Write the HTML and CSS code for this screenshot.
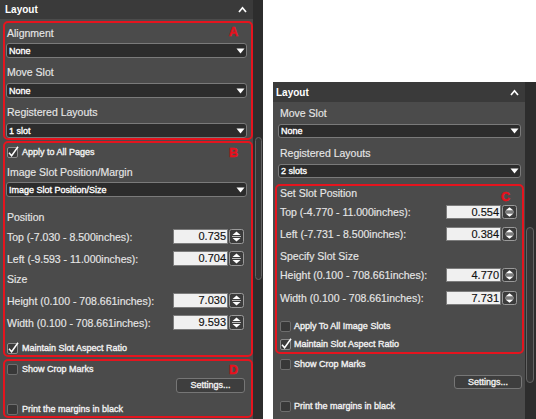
FILE: index.html
```html
<!DOCTYPE html>
<html>
<head>
<meta charset="utf-8">
<link rel="stylesheet" href="styles.css">
</head>
<body>
<div class="page">
  <section class="panel panel-left">
    <div class="panel-main">
      <div class="panel-head">
        <span>Layout</span>
        <svg class="chev" width="9" height="7" viewBox="0 0 9 7"><polyline points="1,6 4.5,1.8 8,6" fill="none" stroke="#fff" stroke-width="1.7"/></svg>
      </div>

      <div class="group group-a">
        <span class="mark">A</span>
        <div class="label l-first">Alignment</div>
        <div class="select s-first"><span>None</span><svg width="9" height="6" viewBox="0 0 9 6"><polygon points="0.5,0.5 8.5,0.5 4.5,5.5" fill="#fff"/></svg></div>
        <div class="label">Move Slot</div>
        <div class="select"><span>None</span><svg width="9" height="6" viewBox="0 0 9 6"><polygon points="0.5,0.5 8.5,0.5 4.5,5.5" fill="#fff"/></svg></div>
        <div class="label">Registered Layouts</div>
        <div class="select"><span>1 slot</span><svg width="9" height="6" viewBox="0 0 9 6"><polygon points="0.5,0.5 8.5,0.5 4.5,5.5" fill="#fff"/></svg></div>
      </div>

      <div class="group group-b">
        <span class="mark">B</span>
        <div class="check c-apply">
          <svg width="12" height="12" viewBox="0 0 12 12"><rect x="0.5" y="1.5" width="10" height="10" rx="1.5" fill="#3a3a3a" stroke="#8c8c8c"/><polyline points="2,6.8 4.6,9.8 11,0.8" fill="none" stroke="#fff" stroke-width="1.5"/></svg>
          <span>Apply to All Pages</span>
        </div>
        <div class="label l-ispm">Image Slot Position/Margin</div>
        <div class="select s-first"><span>Image Slot Position/Size</span><svg width="9" height="6" viewBox="0 0 9 6"><polygon points="0.5,0.5 8.5,0.5 4.5,5.5" fill="#fff"/></svg></div>
        <div class="label l-position">Position</div>
        <div class="row r-top">
          <span class="row-label">Top (-7.030 - 8.500inches):</span>
          <div class="num">0.735</div>
          <svg class="spin" width="15" height="15" viewBox="0 0 15 15"><rect x="0.5" y="0.5" width="14" height="14" rx="2" fill="#3b3b3b" stroke="#9a9a9a"/><polygon points="3.5,6 7.5,2.5 11.5,6" fill="#fff"/><line x1="3" y1="7.5" x2="12" y2="7.5" stroke="#ddd" stroke-width="0.8"/><polygon points="3.5,9 11.5,9 7.5,12.5" fill="#fff"/></svg>
        </div>
        <div class="row r-left">
          <span class="row-label">Left (-9.593 - 11.000inches):</span>
          <div class="num">0.704</div>
          <svg class="spin" width="15" height="15" viewBox="0 0 15 15"><rect x="0.5" y="0.5" width="14" height="14" rx="2" fill="#3b3b3b" stroke="#9a9a9a"/><polygon points="3.5,6 7.5,2.5 11.5,6" fill="#fff"/><line x1="3" y1="7.5" x2="12" y2="7.5" stroke="#ddd" stroke-width="0.8"/><polygon points="3.5,9 11.5,9 7.5,12.5" fill="#fff"/></svg>
        </div>
        <div class="label l-size">Size</div>
        <div class="row r-height">
          <span class="row-label">Height (0.100 - 708.661inches):</span>
          <div class="num">7.030</div>
          <svg class="spin" width="15" height="15" viewBox="0 0 15 15"><rect x="0.5" y="0.5" width="14" height="14" rx="2" fill="#3b3b3b" stroke="#9a9a9a"/><polygon points="3.5,6 7.5,2.5 11.5,6" fill="#fff"/><line x1="3" y1="7.5" x2="12" y2="7.5" stroke="#ddd" stroke-width="0.8"/><polygon points="3.5,9 11.5,9 7.5,12.5" fill="#fff"/></svg>
        </div>
        <div class="row r-width">
          <span class="row-label">Width (0.100 - 708.661inches):</span>
          <div class="num">9.593</div>
          <svg class="spin" width="15" height="15" viewBox="0 0 15 15"><rect x="0.5" y="0.5" width="14" height="14" rx="2" fill="#3b3b3b" stroke="#9a9a9a"/><polygon points="3.5,6 7.5,2.5 11.5,6" fill="#fff"/><line x1="3" y1="7.5" x2="12" y2="7.5" stroke="#ddd" stroke-width="0.8"/><polygon points="3.5,9 11.5,9 7.5,12.5" fill="#fff"/></svg>
        </div>
        <div class="check c-maintain">
          <svg width="12" height="12" viewBox="0 0 12 12"><rect x="0.5" y="1.5" width="10" height="10" rx="1.5" fill="#3a3a3a" stroke="#8c8c8c"/><polyline points="2,6.8 4.6,9.8 11,0.8" fill="none" stroke="#fff" stroke-width="1.5"/></svg>
          <span>Maintain Slot Aspect Ratio</span>
        </div>
      </div>

      <div class="group group-d">
        <span class="mark">D</span>
        <div class="check c-crop">
          <svg width="12" height="12" viewBox="0 0 12 12"><rect x="0.5" y="1.5" width="10" height="10" rx="1.5" fill="#383838" stroke="#6e6e6e"/></svg>
          <span>Show Crop Marks</span>
        </div>
        <div class="btn-row"><div class="btn">Settings...</div></div>
        <div class="check c-print">
          <svg width="12" height="12" viewBox="0 0 12 12"><rect x="0.5" y="1.5" width="10" height="10" rx="1.5" fill="#383838" stroke="#6e6e6e"/></svg>
          <span>Print the margins in black</span>
        </div>
      </div>
    </div>
    <div class="scroll"><div class="thumb"></div></div>
  </section>

  <section class="panel panel-right">
    <div class="panel-main">
      <div class="panel-head">
        <span>Layout</span>
        <svg class="chev" width="9" height="7" viewBox="0 0 9 7"><polyline points="1,6 4.5,1.8 8,6" fill="none" stroke="#fff" stroke-width="1.7"/></svg>
      </div>
      <div class="label rl-move">Move Slot</div>
      <div class="select rs"><span>None</span><svg width="9" height="6" viewBox="0 0 9 6"><polygon points="0.5,0.5 8.5,0.5 4.5,5.5" fill="#fff"/></svg></div>
      <div class="label rl-reg">Registered Layouts</div>
      <div class="select rs"><span>2 slots</span><svg width="9" height="6" viewBox="0 0 9 6"><polygon points="0.5,0.5 8.5,0.5 4.5,5.5" fill="#fff"/></svg></div>

      <div class="group group-c">
        <span class="mark">C</span>
        <div class="label rl-set">Set Slot Position</div>
        <div class="row rr rr-top">
          <span class="row-label">Top (-4.770 - 11.000inches):</span>
          <div class="num">0.554</div>
          <svg class="spin" width="15" height="14" viewBox="0 0 15 14"><rect x="0.5" y="0.5" width="14" height="13" rx="2" fill="#3b3b3b" stroke="#9a9a9a"/><polygon points="3.5,5.6 7.5,2.3 11.5,5.6" fill="#fff"/><line x1="3" y1="7" x2="12" y2="7" stroke="#ddd" stroke-width="0.8"/><polygon points="3.5,8.4 11.5,8.4 7.5,11.7" fill="#fff"/></svg>
        </div>
        <div class="row rr rr-left">
          <span class="row-label">Left (-7.731 - 8.500inches):</span>
          <div class="num">0.384</div>
          <svg class="spin" width="15" height="14" viewBox="0 0 15 14"><rect x="0.5" y="0.5" width="14" height="13" rx="2" fill="#3b3b3b" stroke="#9a9a9a"/><polygon points="3.5,5.6 7.5,2.3 11.5,5.6" fill="#fff"/><line x1="3" y1="7" x2="12" y2="7" stroke="#ddd" stroke-width="0.8"/><polygon points="3.5,8.4 11.5,8.4 7.5,11.7" fill="#fff"/></svg>
        </div>
        <div class="label rl-spec">Specify Slot Size</div>
        <div class="row rr rr-height">
          <span class="row-label">Height (0.100 - 708.661inches):</span>
          <div class="num">4.770</div>
          <svg class="spin" width="15" height="14" viewBox="0 0 15 14"><rect x="0.5" y="0.5" width="14" height="13" rx="2" fill="#3b3b3b" stroke="#9a9a9a"/><polygon points="3.5,5.6 7.5,2.3 11.5,5.6" fill="#fff"/><line x1="3" y1="7" x2="12" y2="7" stroke="#ddd" stroke-width="0.8"/><polygon points="3.5,8.4 11.5,8.4 7.5,11.7" fill="#fff"/></svg>
        </div>
        <div class="row rr rr-width">
          <span class="row-label">Width (0.100 - 708.661inches):</span>
          <div class="num">7.731</div>
          <svg class="spin" width="15" height="14" viewBox="0 0 15 14"><rect x="0.5" y="0.5" width="14" height="13" rx="2" fill="#3b3b3b" stroke="#9a9a9a"/><polygon points="3.5,5.6 7.5,2.3 11.5,5.6" fill="#fff"/><line x1="3" y1="7" x2="12" y2="7" stroke="#ddd" stroke-width="0.8"/><polygon points="3.5,8.4 11.5,8.4 7.5,11.7" fill="#fff"/></svg>
        </div>
        <div class="check rc rc-apply">
          <svg width="12" height="12" viewBox="0 0 12 12"><rect x="0.5" y="1.5" width="10" height="10" rx="1.5" fill="#383838" stroke="#6e6e6e"/></svg>
          <span>Apply To All Image Slots</span>
        </div>
        <div class="check rc rc-maintain">
          <svg width="12" height="12" viewBox="0 0 12 12"><rect x="0.5" y="1.5" width="10" height="10" rx="1.5" fill="#3a3a3a" stroke="#8c8c8c"/><polyline points="2,6.8 4.6,9.8 11,0.8" fill="none" stroke="#fff" stroke-width="1.5"/></svg>
          <span>Maintain Slot Aspect Ratio</span>
        </div>
      </div>

      <div class="check rc rc-crop">
        <svg width="12" height="12" viewBox="0 0 12 12"><rect x="0.5" y="1.5" width="10" height="10" rx="1.5" fill="#383838" stroke="#6e6e6e"/></svg>
        <span>Show Crop Marks</span>
      </div>
      <div class="btn-row r-btn-row"><div class="btn r-btn">Settings...</div></div>
      <div class="check rc rc-print">
        <svg width="12" height="12" viewBox="0 0 12 12"><rect x="0.5" y="1.5" width="10" height="10" rx="1.5" fill="#383838" stroke="#6e6e6e"/></svg>
        <span>Print the margins in black</span>
      </div>
    </div>
    <div class="scroll"><div class="thumb"></div></div>
  </section>
</div>
</body>
</html>
```

FILE: styles.css
```css
* { box-sizing: border-box; }

html, body {
  margin: 0;
  padding: 0;
  background: #ffffff;
}

body {
  font-family: "Liberation Sans", Arial, sans-serif;
  color: #e8e8e8;
}

.page {
  display: flex;
  align-items: flex-start;
  width: 536px;
  height: 419px;
  overflow: hidden;
}

.panel {
  display: flex;
  background: #4b4b4b;
}

.panel-left {
  width: 263px;
  height: 419px;
}

.panel-right {
  width: 263px;
  height: 337px;
  margin-left: 10px;
  margin-top: 82px;
}

.panel-main {
  display: flex;
  flex-direction: column;
}

.panel-left .panel-main { width: 253px; }
.panel-right .panel-main { width: 252px; }

.scroll {
  flex: 1;
  background: #2d2d2d;
}

.thumb {
  border: 1px solid #646464;
  background: #363636;
  border-radius: 4px;
}

.panel-left .thumb {
  width: 7px;
  height: 143px;
  margin-left: 2px;
  margin-top: 137px;
}

.panel-right .thumb {
  width: 8px;
  height: 156px;
  margin-left: 1px;
  margin-top: 145px;
}

.panel-head {
  display: flex;
  align-items: center;
  justify-content: space-between;
  background: #3a3a3a;
  color: #ffffff;
  font-weight: bold;
  font-size: 10px;
}

.panel-left .panel-head {
  height: 19px;
  padding: 0 6px 0 5px;
}

.panel-right .panel-head {
  height: 20px;
  padding: 0 6px 0 3px;
}

/* group boxes */
.group {
  position: relative;
  border: 2px solid #e5141e;
  border-radius: 5px;
  display: flex;
  flex-direction: column;
}

.panel-left .group {
  margin-left: 3px;
  padding: 0 4px 0 1px;
}

.group-a { margin-top: 2px; }
.group-b { margin-top: 1px; }
.group-d { margin-top: 2px; }

.mark {
  position: absolute;
  left: 224px;
  font-size: 12.5px;
  line-height: 12px;
  font-weight: bold;
  color: #e8101c;
  -webkit-text-stroke: 0.5px #e8101c;
}

.group-a .mark { top: 3px; }
.group-b .mark { top: 4px; }
.group-d .mark { top: 3px; }
.group-c .mark { top: 5px; }

/* labels */
.label {
  height: 16px;
  line-height: 16px;
  font-size: 10.5px;
  color: #e6e6e6;
  margin-top: 6px;
  padding-left: 1px;
  white-space: nowrap;
  -webkit-text-stroke: 0.15px #e6e6e6;
}

.label.l-first { margin-top: 2px; }
.label.l-ispm { margin-top: 4px; }
.label.l-position { margin-top: 12px; }
.label.l-size { margin-top: 5px; }

/* selects */
.select {
  height: 15px;
  margin-top: 3px;
  background: #2c2c2c;
  border: 1px solid #7a7a7a;
  border-radius: 3px;
  display: flex;
  align-items: center;
  justify-content: space-between;
  padding: 0 1px 0 2px;
  font-size: 9px;
  color: #ffffff;
  -webkit-text-stroke: 0.35px #ffffff;
}

.select.s-first { margin-top: 2px; }

/* value rows */
.row {
  display: flex;
  align-items: center;
  height: 15px;
  padding-left: 1px;
  padding-right: 3px;
}

.row-label {
  flex: 1;
  font-size: 10.5px;
  color: #e6e6e6;
  white-space: nowrap;
  -webkit-text-stroke: 0.15px #e6e6e6;
}

.num {
  width: 55px;
  height: 15px;
  background: #f0f0f0;
  border: 1px solid #7c7c7c;
  color: #111111;
  font-size: 11px;
  line-height: 13px;
  text-align: right;
  padding-right: 1px;
  -webkit-text-stroke: 0.15px #111111;
}

.spin {
  display: block;
  margin-left: 1px;
}

.r-top { margin-top: 4px; }
.r-left { margin-top: 7px; }
.r-height { margin-top: 6px; }
.r-width { margin-top: 7px; }

/* checkboxes */
.check {
  display: flex;
  align-items: center;
  height: 14px;
  font-size: 9px;
  color: #f2f2f2;
  white-space: nowrap;
  padding-left: 1px;
  -webkit-text-stroke: 0.35px #f2f2f2;
}

.check svg {
  display: block;
  margin-right: 3px;
}

.c-apply { height: 16px; margin-top: 1px; }
.c-maintain { margin-top: 11px; }
.c-crop { margin-top: 1px; }
.c-print { margin-top: 9px; }

/* buttons */
.btn-row {
  display: flex;
  justify-content: flex-end;
  margin-top: 2px;
}

.btn {
  width: 69px;
  height: 15px;
  margin-right: 2px;
  background: #3e3e3e;
  border: 1px solid #767676;
  border-radius: 3px;
  font-size: 9px;
  line-height: 13px;
  text-align: center;
  color: #f2f2f2;
  -webkit-text-stroke: 0.35px #f2f2f2;
}

/* right panel */
.panel-right .label {
  margin-left: 5px;
  padding-left: 2px;
}

.rl-move { margin-top: 3px; }
.rl-reg { margin-top: 7px; }

.select.rs {
  height: 14px;
  margin: 3px 4px 0 5px;
}

.group-c {
  margin: 6px 1px 0 2px;
  padding: 0 5px 1px 0;
}

.group-c .label { margin-left: 0; padding-left: 3px; }

.rl-set { margin-top: 0; height: 14px; line-height: 14px; }
.group-c .rl-spec { margin-top: 7px; }

.rr {
  height: 14px;
  padding-left: 3px;
  padding-right: 0;
}

.rr .num {
  height: 14px;
  line-height: 12px;
}

.rr-top { margin-top: 5px; }
.rr-left { margin-top: 8px; }
.rr-height { margin-top: 4px; }
.rr-width { margin-top: 9px; }

.rc { padding-left: 3px; }
.rc svg { margin-right: 2px; }

.rc-apply { margin-top: 14px; }
.rc-maintain { margin-top: 4px; }

.rc-crop { margin-top: 3px; margin-left: 4px; }
.rc-print { margin-top: 10px; margin-left: 4px; }

.r-btn-row { margin-top: 4px; }
.btn.r-btn {
  width: 68px;
  height: 14px;
  line-height: 12px;
  margin-right: 3px;
}
```
